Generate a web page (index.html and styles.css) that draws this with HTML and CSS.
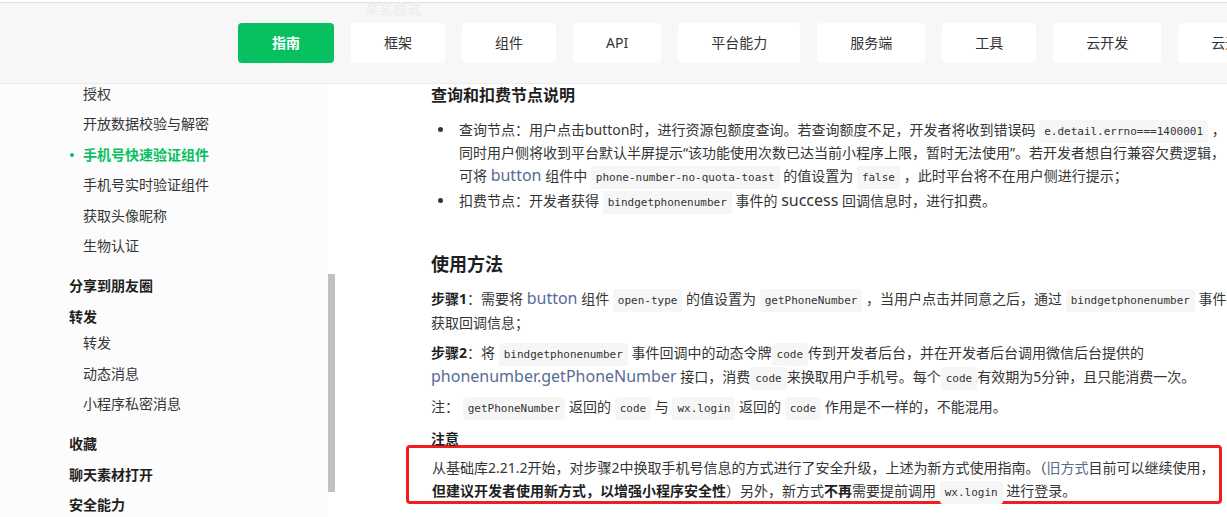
FILE: index.html
```html
<!DOCTYPE html>
<html lang="zh-CN">

<head>
    <meta charset="UTF-8">
    <title>手机号快速验证组件</title>
    <link rel="stylesheet" href="styles.css">
</head>

<body>
<div class="header">
    <span class="ghost">某某模式</span>
    <ul class="nav">
        <li class="active">指南</li>
        <li>框架</li>
        <li>组件</li>
        <li>API</li>
        <li>平台能力</li>
        <li>服务端</li>
        <li>工具</li>
        <li>云开发</li>
        <li>云开发</li>
    </ul>
</div>

<div class="page">
    <div class="sidebar">
        <div class="side-list">
            <ul class="sub-list first">
                <li>授权</li>
                <li>开放数据校验与解密</li>
                <li class="current">手机号快速验证组件</li>
                <li>手机号实时验证组件</li>
                <li>获取头像昵称</li>
                <li>生物认证</li>
            </ul>
            <div class="group">分享到朋友圈</div>
            <div class="group">转发</div>
            <ul class="sub-list">
                <li>转发</li>
                <li>动态消息</li>
                <li>小程序私密消息</li>
            </ul>
            <div class="group">收藏</div>
            <div class="group">聊天素材打开</div>
            <div class="group">安全能力</div>
        </div>
        <div class="scroll-track">
            <div class="thumb"></div>
        </div>
    </div>

    <div class="content">
        <h3>查询和扣费节点说明</h3>
        <ul class="points">
            <li>查询节点：用户点击button时，进行资源包额度查询。若查询额度不足，开发者将收到错误码 <code>e.detail.errno===1400001</code> ，<br>同时用户侧将收到平台默认半屏提示“该功能使用次数已达当前小程序上限，暂时无法使用”。若开发者想自行兼容欠费逻辑，<br>可将 <a class="link">button</a> 组件中 <code>phone-number-no-quota-toast</code> 的值设置为 <code>false</code> ，此时平台将不在用户侧进行提示；</li>
            <li>扣费节点：开发者获得 <code>bindgetphonenumber</code> 事件的 <span class="big">success</span> 回调信息时，进行扣费。</li>
        </ul>

        <h2>使用方法</h2>
        <p><b>步骤1</b>：需要将 <a class="link">button</a> 组件 <code>open-type</code> 的值设置为 <code>getPhoneNumber</code> ，当用户点击并同意之后，通过 <code>bindgetphonenumber</code> 事件<br>获取回调信息；</p>
        <p><b>步骤2</b>：将 <code>bindgetphonenumber</code> 事件回调中的动态令牌<code>code</code>传到开发者后台，并在开发者后台调用微信后台提供的<br><a class="link">phonenumber.getPhoneNumber</a> 接口，消费<code>code</code>来换取用户手机号。每个<code>code</code>有效期为5分钟，且只能消费一次。</p>
        <p>注： <code>getPhoneNumber</code> 返回的 <code>code</code> 与 <code>wx.login</code> 返回的 <code>code</code> 作用是不一样的，不能混用。</p>

        <h4>注意</h4>
        <div class="notice">
            从基础库2.21.2开始，对步骤2中换取手机号信息的方式进行了安全升级，上述为新方式使用指南。（<a class="link small">旧方式</a>目前可以继续使用，<br><b>但建议开发者使用新方式，以增强小程序安全性</b>）另外，新方式<b>不再</b>需要提前调用 <code>wx.login</code> 进行登录。
        </div>
    </div>
</div>
</body>

</html>
```

FILE: styles.css
```css
body {
    margin: 0;
    font-family: "Noto Sans", "Noto Sans CJK SC", sans-serif;
    font-size: 14px;
    color: #353535;
    background-color: white;
    overflow: hidden;
}

ul {
    margin: 0;
    padding: 0;
    list-style: none;
}

/* header */

.header {
    position: relative;
    margin-top: 2px;
    height: 80px;
    padding-left: 238px;
    background-color: #f7f7f7;
    border-top: 1px solid #dedede;
    border-bottom: 1px solid #ececec;
    display: flex;
    align-items: center;
}

.ghost {
    position: absolute;
    top: -5px;
    left: 365px;
    font-weight: bold;
    color: #efefef;
}

.nav {
    display: flex;
    gap: 17px;
}

.nav li {
    height: 40px;
    line-height: 40px;
    padding: 0 33px;
    background-color: white;
    border-radius: 4px;
    color: #333;
    white-space: nowrap;
}

.nav li.active {
    padding: 0 34px;
    background-color: #07c160;
    color: white;
    font-weight: bold;
}

/* sidebar */

.page {
    display: flex;
}

.sidebar {
    display: flex;
    height: 433px;
    overflow: hidden;
}

.side-list {
    width: 328px;
    padding-left: 69px;
    box-sizing: border-box;
    background-color: #fcfcfc;
    margin-top: -5px;
}

.sub-list {
    margin-top: -4px;
    margin-bottom: 10px;
}

.sub-list.first {
    margin-top: 0;
}

.sub-list li {
    line-height: 30.4px;
    padding-left: 14px;
    position: relative;
    white-space: nowrap;
}

.sub-list li.current {
    color: #07c160;
    font-weight: bold;
}

.sub-list li.current:before {
    content: '';
    position: absolute;
    left: 1px;
    top: 13px;
    width: 4px;
    height: 4px;
    border-radius: 50%;
    background-color: #07c160;
}

.group {
    line-height: 30.4px;
    font-weight: bold;
    color: #1f1f1f;
}

.scroll-track {
    width: 7px;
}

.thumb {
    margin-top: 190px;
    height: 218px;
    background-color: #c1c1c1;
}

/* content */

.content {
    padding-left: 96px;
    white-space: nowrap;
}

h3 {
    margin: 0;
    font-size: 16px;
    line-height: 22px;
    color: #1f1f1f;
}

.points {
    margin-top: 12px;
    padding-left: 28px;
}

.points li {
    line-height: 23px;
    margin-bottom: 2px;
    position: relative;
}

.points li:before {
    content: '';
    position: absolute;
    left: -21px;
    top: 9px;
    width: 5px;
    height: 5px;
    border-radius: 50%;
    background-color: #353535;
}

h2 {
    margin: 39px 0 0;
    font-size: 18px;
    line-height: 26px;
    color: #1f1f1f;
}

p {
    margin: 10px 0 0;
    line-height: 24px;
}

p + p {
    margin-top: 6px;
}

h4 {
    margin: 10px 0 0;
    font-size: 14px;
    line-height: 20px;
    color: #1f1f1f;
}

.notice {
    margin: -4px 0 0 -25px;
    width: 787px;
    padding: 8px 0 0 23px;
    height: 45px;
    line-height: 23px;
    border: 3px solid #f21d1d;
    border-radius: 4px;
}

code {
    font-family: "DejaVu Sans Mono", monospace;
    font-size: 11px;
    line-height: 1;
    background-color: #f6f6f6;
    color: #333;
    padding: 5px 5px;
    border-radius: 3px;
}

.link {
    color: #576b95;
    font-size: 16px;
    line-height: 1;
}

.link.small {
    font-size: 14px;
}

.big {
    font-size: 16px;
    line-height: 1;
}

b {
    color: #1f1f1f;
}
```
